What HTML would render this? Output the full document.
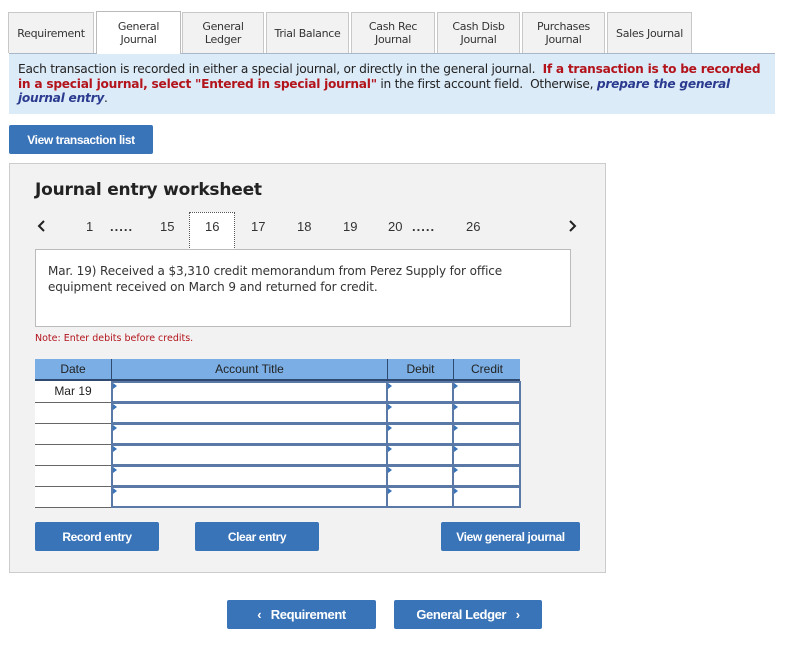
<!DOCTYPE html>
<html><head><style>
*{margin:0;padding:0;box-sizing:border-box}
body{width:787px;height:658px;background:#fff;font-family:"DejaVu Sans","Liberation Sans",sans-serif;position:relative;overflow:hidden;color:#222}
.a{position:absolute}
.tab{position:absolute;top:12px;height:41px;background:#f2f2f2;border:1px solid #c8c8c8;border-bottom:none;font-size:11px;letter-spacing:-0.3px;display:flex;align-items:center;justify-content:center;text-align:center;line-height:13px;color:#333}
.tab.on{background:#fff;height:43px;border-color:#bbb}
.btn{position:absolute;background:#3a74b8;color:#fff;font-family:"Liberation Sans",sans-serif;font-weight:bold;font-size:12px;letter-spacing:-0.4px;display:flex;align-items:center;justify-content:center;border-radius:2px}
.pg{position:absolute;top:219px;font-family:"Liberation Sans",sans-serif;font-size:13px;color:#333}
.cell{position:absolute;background:#fff;border:2px solid #5b79a6}
.cell:before{content:"";position:absolute;left:0;top:0;border-left:4px solid #3a74b8;border-top:3px solid transparent;border-bottom:3px solid transparent}
</style></head><body>
<div class="a" style="left:9px;top:53px;width:766px;height:1px;background:#a8b8c8"></div>
<div class="tab" style="left:8px;width:86px">Requirement</div>
<div class="tab on" style="left:96px;width:85px;top:11px">General<br>Journal</div>
<div class="tab" style="left:182px;width:82px">General<br>Ledger</div>
<div class="tab" style="left:266px;width:83px">Trial Balance</div>
<div class="tab" style="left:351px;width:84px">Cash Rec<br>Journal</div>
<div class="tab" style="left:437px;width:83px">Cash Disb<br>Journal</div>
<div class="tab" style="left:522px;width:83px">Purchases<br>Journal</div>
<div class="tab" style="left:607px;width:85px">Sales Journal</div>
<div class="a" style="left:9px;top:54px;width:766px;height:60px;background:#dcebf8;padding:8px 9px;font-size:12.2px;letter-spacing:-0.25px;line-height:14.5px;color:#222;white-space:nowrap;overflow:hidden">Each transaction is recorded in either a special journal, or directly in the general journal.&nbsp; <b style="color:#b3141c">If a transaction is to be recorded<br>in a special journal, select "Entered in special journal"</b> in the first account field.&nbsp; Otherwise, <i style="color:#2b3b8f;font-weight:bold">prepare the general<br>journal entry</i>.</div>
<div class="btn" style="left:9px;top:125px;width:144px;height:29px">View transaction list</div>
<div class="a" style="left:9px;top:163px;width:597px;height:410px;background:#f2f2f2;border:1px solid #ccc"></div>
<div class="a" style="left:35px;top:180px;font-size:17px;font-weight:bold;color:#222;letter-spacing:-0.2px">Journal entry worksheet</div>
<svg class="a" style="left:36px;top:219px" width="12" height="14"><path d="M8 2 L3 7 L8 12" fill="none" stroke="#222" stroke-width="2"/></svg>
<div class="pg" style="left:86px">1</div>
<div class="pg" style="left:110px;font-weight:bold;letter-spacing:1px">.....</div>
<div class="pg" style="left:160px">15</div>
<div class="a" style="left:189px;top:212px;width:46px;height:38px;background:#fff;border:1px dotted #555"></div>
<div class="pg" style="left:205px">16</div>
<div class="pg" style="left:251px">17</div>
<div class="pg" style="left:297px">18</div>
<div class="pg" style="left:343px">19</div>
<div class="pg" style="left:388px">20</div>
<div class="pg" style="left:412px;font-weight:bold;letter-spacing:1px">.....</div>
<div class="pg" style="left:466px">26</div>
<svg class="a" style="left:566px;top:219px" width="12" height="14"><path d="M4 2 L9 7 L4 12" fill="none" stroke="#222" stroke-width="2"/></svg>
<div class="a" style="left:35px;top:249px;width:536px;height:78px;background:#fff;border:1px solid #bbb;padding:14px 12px;font-size:12px;letter-spacing:-0.1px;line-height:15.5px;color:#333"><span style="display:block;width:470px">Mar. 19) Received a $3,310 credit memorandum from Perez Supply for office equipment received on March 9 and returned for credit.</span></div>
<div class="a" style="left:35px;top:333px;font-size:9.5px;color:#b3141c">Note: Enter debits before credits.</div>
<div class="a" style="left:35px;top:359px;width:485px;height:22px;background:#7aaee4;border-bottom:2px solid #2f4a70;font-family:'Liberation Sans',sans-serif;font-size:12px;color:#222">
<div class="a" style="left:0;width:76px;text-align:center;top:3px">Date</div>
<div class="a" style="left:76px;width:276px;text-align:center;top:0;border-left:1px solid #2f4a70;height:20px;padding-top:3px">Account Title</div>
<div class="a" style="left:352px;width:66px;text-align:center;top:0;padding-top:3px;border-left:1px solid #2f4a70;height:20px">Debit</div>
<div class="a" style="left:418px;width:67px;text-align:center;top:0;padding-top:3px;border-left:1px solid #2f4a70;height:20px">Credit</div>
</div>
<div class="a" style="left:35px;top:381px;width:76px;height:126px;background:#fff"></div>
<div class="a" style="left:35px;top:384px;width:76px;text-align:center;font-family:'Liberation Sans',sans-serif;font-size:12px">Mar 19</div>
<div class="a" style="left:35px;top:402px;width:76px;height:1px;background:#666"></div>
<div class="a" style="left:35px;top:423px;width:76px;height:1px;background:#666"></div>
<div class="a" style="left:35px;top:444px;width:76px;height:1px;background:#666"></div>
<div class="a" style="left:35px;top:465px;width:76px;height:1px;background:#666"></div>
<div class="a" style="left:35px;top:486px;width:76px;height:1px;background:#666"></div>
<div class="a" style="left:35px;top:507px;width:76px;height:1px;background:#666"></div>
<div class="cell" style="left:111px;top:381px;width:277px;height:22px"></div><div class="cell" style="left:386px;top:381px;width:68px;height:22px"></div><div class="cell" style="left:452px;top:381px;width:69px;height:22px"></div>
<div class="cell" style="left:111px;top:402px;width:277px;height:22px"></div><div class="cell" style="left:386px;top:402px;width:68px;height:22px"></div><div class="cell" style="left:452px;top:402px;width:69px;height:22px"></div>
<div class="cell" style="left:111px;top:423px;width:277px;height:22px"></div><div class="cell" style="left:386px;top:423px;width:68px;height:22px"></div><div class="cell" style="left:452px;top:423px;width:69px;height:22px"></div>
<div class="cell" style="left:111px;top:444px;width:277px;height:22px"></div><div class="cell" style="left:386px;top:444px;width:68px;height:22px"></div><div class="cell" style="left:452px;top:444px;width:69px;height:22px"></div>
<div class="cell" style="left:111px;top:465px;width:277px;height:22px"></div><div class="cell" style="left:386px;top:465px;width:68px;height:22px"></div><div class="cell" style="left:452px;top:465px;width:69px;height:22px"></div>
<div class="cell" style="left:111px;top:486px;width:277px;height:22px"></div><div class="cell" style="left:386px;top:486px;width:68px;height:22px"></div><div class="cell" style="left:452px;top:486px;width:69px;height:22px"></div>
<div class="btn" style="left:35px;top:522px;width:124px;height:29px">Record entry</div>
<div class="btn" style="left:195px;top:522px;width:124px;height:29px">Clear entry</div>
<div class="btn" style="left:441px;top:522px;width:139px;height:29px">View general journal</div>
<div class="btn" style="left:227px;top:600px;width:149px;height:29px;font-size:13px">&#8249;&nbsp;&nbsp;&nbsp;Requirement</div>
<div class="btn" style="left:394px;top:600px;width:148px;height:29px;font-size:13px">General Ledger&nbsp;&nbsp;&nbsp;&#8250;</div>
</body></html>
